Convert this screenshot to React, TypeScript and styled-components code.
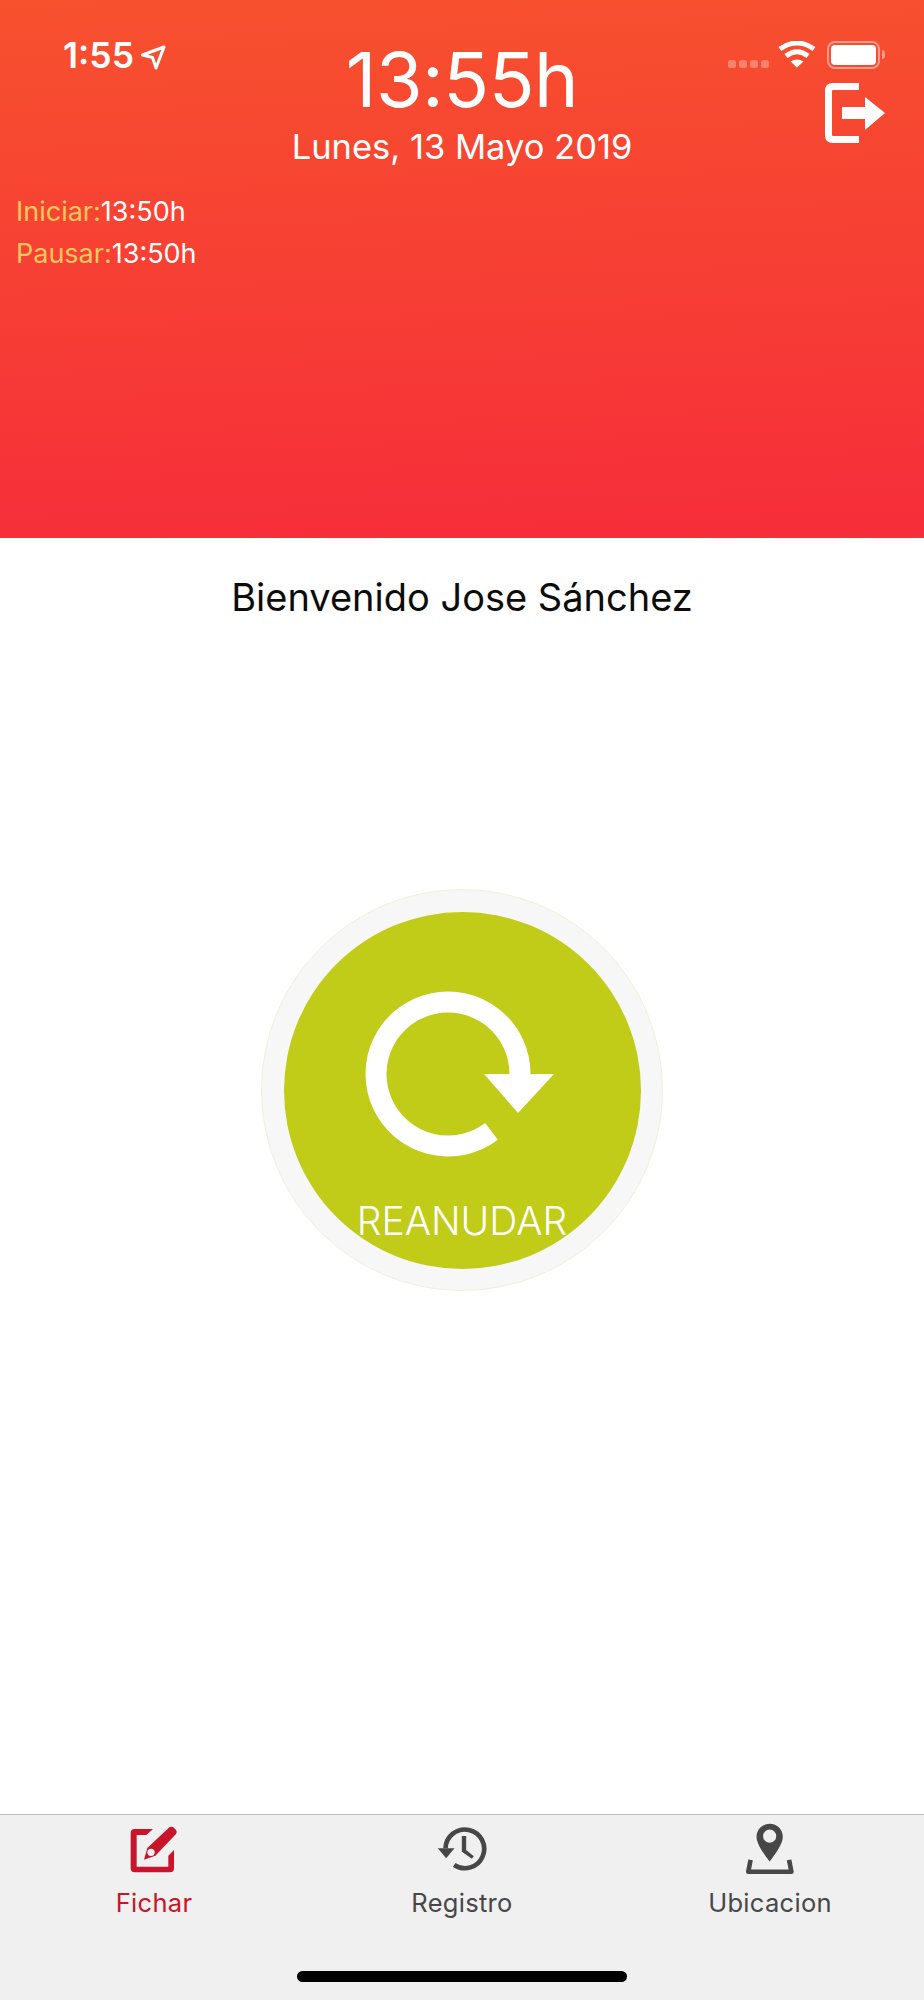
import React from "react";
import styled, { createGlobalStyle } from "styled-components";

const GlobalStyle = createGlobalStyle`
  html, body {
    margin: 0;
    padding: 0;
    background: #fff;
  }
  body {
    font-family: Inter, "Liberation Sans", sans-serif;
  }
`;

const Screen = styled.div`
  width: 924px;
  height: 2000px;
  display: flex;
  flex-direction: column;
  overflow: hidden;
  background: #fff;
`;

const Header = styled.header`
  height: 538px;
  box-sizing: border-box;
  background: linear-gradient(178deg, #f7512e 0%, #f62d3a 100%);
  color: #fff;
`;

const TopRow = styled.div`
  display: grid;
  grid-template-columns: 1fr auto 1fr;
`;

const StatusLeft = styled.div`
  display: flex;
  align-items: flex-start;
  gap: 6px;
  padding: 37px 0 0 63px;
`;

const StatusTime = styled.span`
  font-size: 35.5px;
  line-height: 38px;
  font-weight: 600;
`;

const ClockBlock = styled.div`
  display: flex;
  flex-direction: column;
  align-items: center;
  padding-top: 35px;
`;

const Clock = styled.div`
  font-size: 75.5px;
  line-height: 90px;
  font-weight: 400;
  letter-spacing: -0.5px;
`;

const DateLine = styled.div`
  font-size: 34.5px;
  line-height: 40px;
  margin-top: 2px;
`;

const StatusRight = styled.div`
  display: flex;
  flex-direction: column;
  align-items: flex-end;
  padding: 41px 38px 0 0;
`;

const StatusIcons = styled.div`
  display: flex;
  align-items: flex-start;
  gap: 9px;
  height: 42px;
  margin-right: 6px;
`;

const SignalDots = styled.div`
  display: flex;
  gap: 3px;
  margin-top: 19px;
`;

const Dot = styled.span`
  width: 8px;
  height: 8px;
  border-radius: 2.5px;
  background: rgba(255, 255, 255, 0.3);
`;

const Battery = styled.div`
  position: relative;
  width: 53px;
  height: 28px;
  margin-left: 2px;
  box-sizing: border-box;
  border: 2px solid rgba(255, 255, 255, 0.45);
  border-radius: 8px;
  padding: 2px;
  &::before {
    content: "";
    display: block;
    height: 100%;
    background: #fff;
    border-radius: 4px;
  }
  &::after {
    content: "";
    position: absolute;
    right: -7px;
    top: 7px;
    width: 3px;
    height: 9px;
    border-radius: 0 3px 3px 0;
    background: rgba(255, 255, 255, 0.45);
  }
`;

const LogoutIcon = styled.svg`
  display: block;
  width: 62px;
  height: 62px;
`;

const PunchList = styled.div`
  display: flex;
  flex-direction: column;
  gap: 11px;
  padding: 29px 0 0 16px;
`;

const PunchRow = styled.div`
  font-size: 27px;
  line-height: 31px;
`;

const PunchLabel = styled.span`
  color: #fdc85d;
`;

const Main = styled.main`
  flex: 1;
  display: flex;
  flex-direction: column;
  align-items: center;
`;

const Welcome = styled.h1`
  margin: 36px 0 0;
  font-size: 38px;
  line-height: 46px;
  font-weight: 400;
  color: #0c0c0c;
`;

const PunchButton = styled.div`
  width: 402px;
  height: 402px;
  margin-top: 269px;
  box-sizing: border-box;
  border: 1px solid #eff2d8;
  border-radius: 50%;
  background: #f7f7f7;
  display: flex;
  align-items: center;
  justify-content: center;
`;

const PunchFace = styled.div`
  width: 357px;
  height: 357px;
  border-radius: 50%;
  background: #c0cc18;
  display: flex;
  flex-direction: column;
  align-items: center;
  color: #fff;
`;

const ResumeIcon = styled.svg`
  display: block;
  width: 220px;
  height: 200px;
  margin-top: 72px;
`;

const PunchText = styled.span`
  margin-top: 15px;
  font-size: 39px;
  line-height: 44px;
  font-weight: 300;
`;

const TabBar = styled.nav`
  position: relative;
  height: 186px;
  box-sizing: border-box;
  border-top: 1px solid #bdbdbd;
  background: #f0f0f0;
  display: grid;
  grid-template-columns: repeat(3, 1fr);
  align-items: start;
`;

const Tab = styled.div<{ $active?: boolean }>`
  display: flex;
  flex-direction: column;
  align-items: center;
  color: ${({ $active }) => ($active ? "#c9142b" : "#474747")};
`;

const TabIcon = styled.div`
  height: 61px;
  display: flex;
  align-items: flex-end;
  justify-content: center;
`;

const HistorySvg = styled.svg`
  display: block;
  width: 52px;
  height: 45px;
  margin-bottom: 5px;
`;

const TabLabel = styled.span`
  margin-top: 11px;
  font-size: 25.5px;
  line-height: 32px;
  letter-spacing: 0.3px;
`;

const HomeIndicator = styled.div`
  position: absolute;
  left: 297px;
  bottom: 18px;
  width: 330px;
  height: 11px;
  border-radius: 6px;
  background: #000;
`;

const StatusArrow = styled.svg`
  display: block;
  width: 26px;
  height: 26px;
  margin-top: 7px;
`;

const LocationArrow = () => (
  <StatusArrow viewBox="0 0 26 26">
    <path
      d="M2.5 11 L24 3 L16 24 L12.5 13.5 Z"
      fill="none"
      stroke="#fff"
      strokeWidth="3"
      strokeLinejoin="round"
    />
  </StatusArrow>
);

const Wifi = () => (
  <svg width="38" height="28" viewBox="0 0 38 28">
    <path d="M19 26.5 L12.5 20.5 Q19 16.5 25.5 20.5 Z" fill="#fff" />
    <path
      d="M8 15 Q19 6.5 30 15 M2 8 Q19 -4 36 8"
      fill="none"
      stroke="#fff"
      strokeWidth="5"
    />
  </svg>
);

const EditIcon = () => (
  <svg width="54" height="52" viewBox="380 70 160 156">
    <path
      d="M402 85 H457 L437 103 H408 V198 H503 V165 L520 148 V203 Q520 215 508 215 H402 Q390 215 390 203 V97 Q390 85 402 85 Z"
      fill="currentColor"
    />
    <path
      d="M430 177 L440 142 L506 80 Q512 76 518 80 L526 88 Q531 94 526 100 L464 165 Z"
      fill="currentColor"
    />
    <circle cx="451" cy="155" r="11" fill="#f0f0f0" />
  </svg>
);

const HistoryIcon = () => (
  <HistorySvg viewBox="30 25 155 135">
    <path
      d="M84 142 A58 58 0 1 0 58 92"
      fill="none"
      stroke="currentColor"
      strokeWidth="14"
    />
    <path d="M35 92 H85 L60 122 Z" fill="currentColor" />
    <path d="M107 55 H120 V97 L143 116 L137 123 L107 102 Z" fill="currentColor" />
  </HistorySvg>
);

const LocationTrayIcon = () => (
  <svg width="50" height="54" viewBox="845 66 152 162">
    <path
      fillRule="evenodd"
      d="M920 70 C943 70 960 88 960 110 C960 130 940 160 920 185 C900 160 880 130 880 110 C880 88 897 70 920 70 Z M920 88 A20 20 0 1 0 920 128 A20 20 0 1 0 920 88 Z"
      fill="currentColor"
    />
    <path
      d="M862 180 L855 216 H986 L979 180"
      fill="none"
      stroke="currentColor"
      strokeWidth="14"
      strokeLinejoin="round"
    />
  </svg>
);

export default function App() {
  return (
    <Screen>
      <GlobalStyle />
      <Header>
        <TopRow>
          <StatusLeft>
            <StatusTime>1:55</StatusTime>
            <LocationArrow />
          </StatusLeft>
          <ClockBlock>
            <Clock>13:55h</Clock>
            <DateLine>Lunes, 13 Mayo 2019</DateLine>
          </ClockBlock>
          <StatusRight>
            <StatusIcons>
              <SignalDots>
                <Dot />
                <Dot />
                <Dot />
                <Dot />
              </SignalDots>
              <Wifi />
              <Battery />
            </StatusIcons>
            <LogoutIcon viewBox="0 0 62 62">
              <path
                d="M35 3.5 H9 Q4.5 3.5 4.5 8 V52 Q4.5 56.5 9 56.5 H35"
                fill="none"
                stroke="#fff"
                strokeWidth="7"
              />
              <path d="M18 24 H41 V14 L61 30 L41 47 V36 H18 Z" fill="#fff" />
            </LogoutIcon>
          </StatusRight>
        </TopRow>
        <PunchList>
          <PunchRow>
            <PunchLabel>Iniciar:</PunchLabel>13:50h
          </PunchRow>
          <PunchRow>
            <PunchLabel>Pausar:</PunchLabel>13:50h
          </PunchRow>
        </PunchList>
      </Header>
      <Main>
        <Welcome>Bienvenido Jose Sánchez</Welcome>
        <PunchButton>
          <PunchFace>
            <ResumeIcon viewBox="0 0 220 200">
              <path
                d="M139.5 147.4 A72 72 0 1 1 168 90"
                fill="none"
                stroke="#fff"
                strokeWidth="21"
              />
              <path d="M132 90 H202 L166 129 Z" fill="#fff" />
            </ResumeIcon>
            <PunchText>REANUDAR</PunchText>
          </PunchFace>
        </PunchButton>
      </Main>
      <TabBar>
        <Tab $active>
          <TabIcon>
            <EditIcon />
          </TabIcon>
          <TabLabel>Fichar</TabLabel>
        </Tab>
        <Tab>
          <TabIcon>
            <HistoryIcon />
          </TabIcon>
          <TabLabel>Registro</TabLabel>
        </Tab>
        <Tab>
          <TabIcon>
            <LocationTrayIcon />
          </TabIcon>
          <TabLabel>Ubicacion</TabLabel>
        </Tab>
        <HomeIndicator />
      </TabBar>
    </Screen>
  );
}
